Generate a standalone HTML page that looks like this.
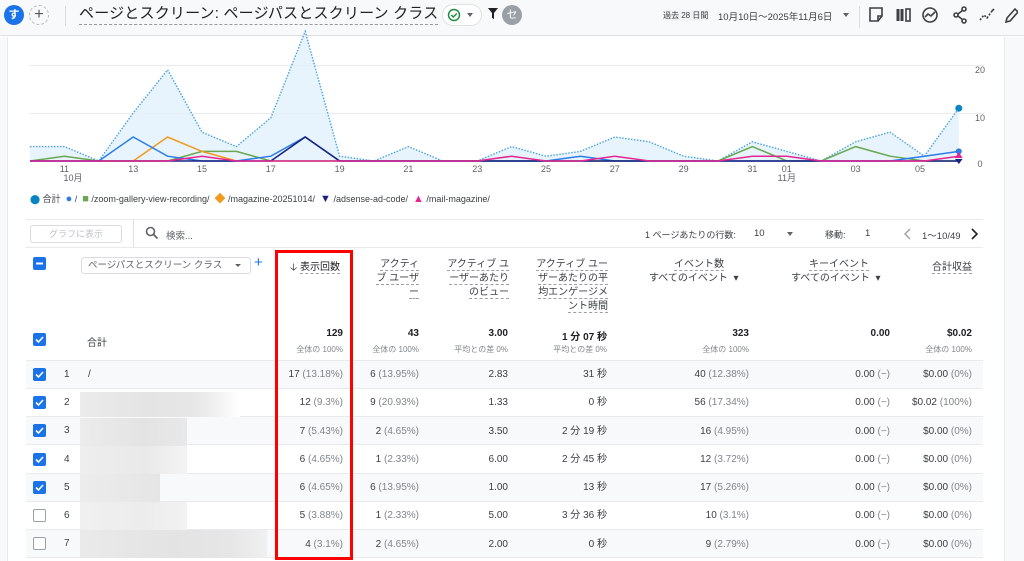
<!DOCTYPE html>
<html><head><meta charset="utf-8"><style>
*{box-sizing:border-box;margin:0;padding:0}
body{width:1024px;height:561px;overflow:hidden;background:#fff;font-family:"Liberation Sans","Noto Sans CJK JP",sans-serif;color:#3c4043;position:relative}
.a{position:absolute;white-space:nowrap}
.r{text-align:right}
.t{font-size:10px}
.g{color:#80868b}
.dash{border-bottom:1px dashed #9aa0a6}
.cb{position:absolute;width:13px;height:13px;border-radius:2px;background:#1a73e8}
.cb svg{position:absolute;left:1px;top:1px}
.ce{position:absolute;width:13px;height:13px;border-radius:2px;border:1.5px solid #9aa0a6;background:#fff}
.row{position:absolute;left:26px;width:957px;height:28px;border-bottom:1px solid #e8eaed}
</style></head><body>
<div class="a" style="left:0;top:0;width:1024px;height:36px;background:#f8f9fa;border-bottom:1px solid #e0e0e0"></div>
<div class="a" style="left:4px;top:5px;width:20px;height:20px;border-radius:50%;background:#1a73e8;color:#fff;font-size:11px;text-align:center;line-height:20px;font-weight:bold">す</div>
<div class="a" style="left:29px;top:5px;width:20px;height:20px;border-radius:50%;border:1px dashed #bbb;color:#555;font-size:16px;text-align:center;line-height:18px">+</div>
<div class="a" style="left:65px;top:6px;width:1px;height:20px;background:#ddd"></div>
<div class="a" style="left:79px;top:4px;font-size:15px;letter-spacing:0.2px;color:#202124;border-bottom:1.5px dashed #999;line-height:20px">ページとスクリーン: ページパスとスクリーン クラス</div>
<div class="a" style="left:442px;top:4px;width:40px;height:22px;border:1px solid #e0e0e0;border-radius:11px;background:#fff"></div>
<svg class="a" style="left:447px;top:8px" width="14" height="14"><circle cx="7" cy="7" r="5.5" fill="none" stroke="#1e8e3e" stroke-width="1.5"/><path d="M4.3 7l2 2 3.5-3.5" fill="none" stroke="#1e8e3e" stroke-width="1.5"/></svg>
<div class="a" style="left:467px;top:13px;border:3px solid transparent;border-top:4px solid #5f6368"></div>
<svg class="a" style="left:487px;top:7px" width="12" height="14"><path d="M1 1h10l-4 5v6l-2-1V6z" fill="#202124"/></svg>
<div class="a" style="left:502px;top:5px;width:20px;height:20px;border-radius:50%;background:#9aa0a6;color:#fff;font-size:11px;text-align:center;line-height:20px">セ</div>
<div class="a" style="left:663px;top:10px;font-size:8px;color:#3c4043;background:#f1f3f4">過去 28 日間</div>
<div class="a" style="left:718px;top:9px;font-size:9.5px;color:#3c4043">10月10日～2025年11月6日</div>
<div class="a" style="left:843px;top:13px;border:3px solid transparent;border-top:4px solid #5f6368"></div>
<div class="a" style="left:859px;top:6px;width:1px;height:22px;background:#ddd"></div>
<svg class="a" style="left:868px;top:6px;width:150px;height:18px" viewBox="0 0 150 18" fill="none" stroke="#3c4043" stroke-width="1.6">
<path d="M2 2h12v8l-4 5H2z M10 15v-5h4"/>
<path d="M30 3v12M34 3v12" stroke-width="3"/><rect x="38" y="3" width="4" height="12"/>
<circle cx="62" cy="9" r="7"/><path d="M57 11l3-3 3 2 4-4"/>
<circle cx="96" cy="3" r="2"/><circle cx="88" cy="9" r="2"/><circle cx="96" cy="15" r="2"/><path d="M90 8l5-4M90 10l5 4"/>
<path d="M112 14l4-5 3 3 5-7" stroke-dasharray="2 1.5"/><path d="M124 5l2-2"/>
<path d="M138 16l1-4 8-9 3 3-8 9z"/>
</svg>
<div class="a" style="left:0;top:37px;width:8px;height:524px;background:#f8f9fa;border-right:1px solid #e8eaed"></div>
<div class="a" style="left:1004px;top:37px;width:20px;height:524px;background:#f8f9fa;border-left:1px solid #e8eaed"></div>
<svg class="a" style="left:0;top:0" width="1004" height="210">
<g stroke="#e8eaed" stroke-width="1"><path d="M30 65.5H985M30 113.5H985"/></g>
<path d="M30 146.6L64.4 146.6L98.8 161L133.2 113L167.6 69.8L202 132.2L236.4 146.6L270.8 117.8L305.2 31.4L339.6 156.2L374 161L408.4 146.6L442.8 161L477.2 161L511.6 146.6L546 156.2L580.4 151.4L614.8 137L649.2 141.8L683.6 156.2L718 161L752.4 141.8L786.8 151.4L821.2 161L855.6 141.8L890 132.2L924.4 156.2L958.8 108.2L958.8 161L30 161Z" fill="#e3f2fd" opacity=".85"/>
<path d="M30 146.6L64.4 146.6L98.8 161L133.2 113L167.6 69.8L202 132.2L236.4 146.6L270.8 117.8L305.2 31.4L339.6 156.2L374 161L408.4 146.6L442.8 161L477.2 161L511.6 146.6L546 156.2L580.4 151.4L614.8 137L649.2 141.8L683.6 156.2L718 161L752.4 141.8L786.8 151.4L821.2 161L855.6 141.8L890 132.2L924.4 156.2L958.8 108.2" fill="none" stroke="#4aa3df" stroke-width="1.4" stroke-dasharray="1.5 1.5"/>
<path d="M30 161L64.4 156.2L98.8 161L167.6 161L202 151.4L236.4 151.4L270.8 161L718 161L752.4 146.6L786.8 161L821.2 161L855.6 146.6L890 156.2L924.4 161L958.8 161" fill="none" stroke="#6aa84f" stroke-width="1.5"/>
<path d="M133.2 161L167.6 137L202 151.4L236.4 161" fill="none" stroke="#f29a1e" stroke-width="1.5"/>
<path d="M30 161L98.8 161L133.2 137L167.6 156.2L202 161L236.4 161L270.8 156.2L305.2 137L339.6 161L546 161L580.4 156.2L614.8 161L890 161L924.4 156.2L958.8 151.4" fill="none" stroke="#2b7de9" stroke-width="1.5"/>
<path d="M30 161L270.8 161L305.2 137L339.6 161L958.8 161" fill="none" stroke="#1a237e" stroke-width="1.6"/>
<path d="M30 161L167.6 161L202 156.2L236.4 161L477.2 161L511.6 156.2L546 161L580.4 161L614.8 156.2L649.2 161L718 161L752.4 156.2L786.8 156.2L821.2 161L924.4 161L958.8 156.2" fill="none" stroke="#e52592" stroke-width="1.5"/>
<circle cx="958.8" cy="108.2" r="3.5" fill="#0b84c4"/><circle cx="958.8" cy="151.4" r="3" fill="#2b7de9"/><path d="M955 158l3.8-6 3.8 6z" fill="#e52592"/><path d="M955 159h7.6l-3.8 5z" fill="#1a237e"/>
<g font-size="9" fill="#5f6368" font-family="Liberation Sans,sans-serif" text-anchor="middle">
<text x="64.4" y="172">11</text><text x="73" y="181">10月</text><text x="133.2" y="172">13</text><text x="202" y="172">15</text><text x="270.8" y="172">17</text><text x="339.6" y="172">19</text><text x="408.4" y="172">21</text><text x="477.2" y="172">23</text><text x="546" y="172">25</text><text x="614.8" y="172">27</text><text x="683.6" y="172">29</text><text x="752.4" y="172">31</text><text x="786.8" y="172">01</text><text x="786.8" y="181">11月</text><text x="855.6" y="172">03</text><text x="920" y="172">05</text>
<text x="980" y="73">20</text><text x="980" y="121">10</text><text x="980" y="167">0</text></g>
</svg>
<div class="a t" style="left:30px;top:190px;font-size:9px;color:#3c4043">
<span style="color:#0b84c4">⬤</span> 合計 &nbsp;<span style="color:#2b7de9;font-size:11px">●</span> / &nbsp;<span style="color:#6aa84f;font-size:11px">■</span> /zoom-gallery-view-recording/ &nbsp;<span style="color:#f29a1e;font-size:11px">◆</span> /magazine-20251014/ &nbsp;<span style="color:#1a237e;font-size:11px">▼</span> /adsense-ad-code/ &nbsp;<span style="color:#e52592;font-size:11px">▲</span> /mail-magazine/</div>
<div class="a" style="left:26px;top:219px;width:957px;height:1px;background:#e8eaed"></div>
<div class="a" style="left:26px;top:247px;width:957px;height:1px;background:#e8eaed"></div>
<div class="a" style="left:30px;top:225px;width:92px;height:18px;border:1px solid #dadce0;border-radius:3px;font-size:9px;color:#bdc1c6;text-align:center;line-height:16px">グラフに表示</div>
<div class="a" style="left:133px;top:220px;width:1px;height:27px;background:#e0e0e0"></div>
<svg class="a" style="left:145px;top:226px" width="14" height="14"><circle cx="5.5" cy="5.5" r="4" fill="none" stroke="#5f6368" stroke-width="1.6"/><path d="M8.5 8.5l4 4" stroke="#5f6368" stroke-width="1.8"/></svg>
<div class="a" style="left:166px;top:228px;font-size:9.5px;color:#5f6368">検索...</div>
<div class="a" style="left:645px;top:228px;font-size:9px;color:#3c4043">1 ページあたりの行数:</div>
<div class="a" style="left:754px;top:228px;font-size:9.5px;color:#3c4043">10</div>
<div class="a" style="left:787px;top:232px;border:3.5px solid transparent;border-top:4px solid #5f6368"></div>
<div class="a" style="left:825px;top:228px;font-size:9px;color:#3c4043">移動:</div>
<div class="a" style="left:865px;top:228px;font-size:9.5px;color:#3c4043">1</div>
<svg class="a" style="left:904px;top:228px" width="8" height="12"><path d="M6 1L1 6l5 5" fill="none" stroke="#9aa0a6" stroke-width="1.4"/></svg>
<div class="a" style="left:922px;top:228px;font-size:9.5px;color:#3c4043">1～10/49</div>
<svg class="a" style="left:970px;top:228px" width="8" height="12"><path d="M2 1l5 5-5 5" fill="none" stroke="#202124" stroke-width="1.6"/></svg>
<div class="cb" style="left:33px;top:257px"><svg width="11" height="11"><path d="M2 5.5h7" stroke="#fff" stroke-width="2"/></svg></div>
<div class="a" style="left:81px;top:257px;width:170px;height:17px;border:1px solid #dadce0;border-radius:3px;font-size:9.5px;color:#5f6368;padding-left:6px;line-height:15px">ページパスとスクリーン クラス</div>
<div class="a" style="left:235px;top:264px;border:3px solid transparent;border-top:3.5px solid #5f6368"></div>
<div class="a" style="left:254px;top:254px;font-size:15px;color:#1a73e8">+</div>
<div class="a t" style="left:290px;top:258px;color:#202124">🡣 <span class="dash">表示回数</span></div>
<div class="a t r" style="left:360px;top:258px;width:59px;line-height:14px;color:#3c4043"><span class="dash">アクティ</span><br><span class="dash">ブ ユーザ</span><br><span class="dash">ー</span></div>
<div class="a t r" style="left:440px;top:258px;width:69px;line-height:14px"><span class="dash">アクティブ ユ</span><br><span class="dash">ーザーあたり</span><br><span class="dash">のビュー</span></div>
<div class="a t r" style="left:530px;top:258px;width:78px;line-height:14px"><span class="dash">アクティブ ユー</span><br><span class="dash">ザーあたりの平</span><br><span class="dash">均エンゲージメ</span><br><span class="dash">ント時間</span></div>
<div class="a t" style="left:649px;top:258px;line-height:14px"><span class="dash" style="margin-left:25px">イベント数</span><br>すべてのイベント &nbsp;▾</div>
<div class="a t" style="left:791px;top:258px;line-height:14px"><span class="dash" style="margin-left:18px">キーイベント</span><br>すべてのイベント &nbsp;▾</div>
<div class="a t r" style="left:900px;top:258px;width:72px"><span class="dash">合計収益</span></div>
<div class="cb" style="left:33px;top:333px"><svg width="11" height="11"><path d="M2 5.5l2.5 2.5 4.5-5" fill="none" stroke="#fff" stroke-width="1.6"/></svg></div>
<div class="a t" style="left:87px;top:334px;color:#3c4043">合計</div>
<div class="a r" style="left:0;top:328px;width:343px;font-size:10px;font-weight:bold;color:#202124">129</div>
<div class="a r" style="left:0;top:328px;width:419px;font-size:10px;font-weight:bold;color:#202124">43</div>
<div class="a r" style="left:0;top:328px;width:508px;font-size:10px;font-weight:bold;color:#202124">3.00</div>
<div class="a r" style="left:0;top:328px;width:607px;font-size:10px;font-weight:bold;color:#202124">1 分 07 秒</div>
<div class="a r" style="left:0;top:328px;width:749px;font-size:10px;font-weight:bold;color:#202124">323</div>
<div class="a r" style="left:0;top:328px;width:890px;font-size:10px;font-weight:bold;color:#202124">0.00</div>
<div class="a r" style="left:0;top:328px;width:972px;font-size:10px;font-weight:bold;color:#202124">$0.02</div>
<div class="a r g" style="left:0;top:344px;width:343px;font-size:8px">全体の 100%</div>
<div class="a r g" style="left:0;top:344px;width:419px;font-size:8px">全体の 100%</div>
<div class="a r g" style="left:0;top:344px;width:508px;font-size:8px">平均との差 0%</div>
<div class="a r g" style="left:0;top:344px;width:607px;font-size:8px">平均との差 0%</div>
<div class="a r g" style="left:0;top:344px;width:749px;font-size:8px">全体の 100%</div>
<div class="a r g" style="left:0;top:344px;width:972px;font-size:8px">全体の 100%</div>
<div class="a" style="left:26px;top:360px;width:957px;height:1px;background:#e8eaed"></div>
<div class="row" style="top:361px;background:#f8f9fa"></div>
<div class="row" style="top:389px;background:#fff"></div>
<div class="row" style="top:417px;background:#f8f9fa"></div>
<div class="row" style="top:446px;background:#fff"></div>
<div class="row" style="top:474px;background:#f8f9fa"></div>
<div class="row" style="top:502px;background:#fff"></div>
<div class="row" style="top:530px;background:#f8f9fa"></div>
<div class="a" style="left:80px;top:392px;width:160px;height:25px;background:linear-gradient(90deg,#ebebeb 0,#e4e4e4 40%,#e6e6e6 70%,#f0f0f0 85%,#fff 100%)"></div>
<div class="a" style="left:80px;top:418px;width:107px;height:28px;background:linear-gradient(90deg,#ececec,#e3e3e3 60%,#e8e8e8)"></div>
<div class="a" style="left:80px;top:446px;width:107px;height:28px;background:linear-gradient(90deg,#eeeeee,#e9e9e9 60%,#f3f3f3)"></div>
<div class="a" style="left:80px;top:474px;width:80px;height:28px;background:linear-gradient(90deg,#ececec,#e5e5e5)"></div>
<div class="a" style="left:80px;top:502px;width:107px;height:28px;background:linear-gradient(90deg,#f0f0f0,#ececec 60%,#f2f2f2)"></div>
<div class="a" style="left:80px;top:530px;width:187px;height:28px;background:linear-gradient(90deg,#eaeaea,#e3e3e3 50%,#e6e6e6 80%,#f0f0f0)"></div>
<div class="cb" style="left:33px;top:368px"><svg width="11" height="11"><path d="M2 5.5l2.5 2.5 4.5-5" fill="none" stroke="#fff" stroke-width="1.6"/></svg></div>
<div class="cb" style="left:33px;top:396px"><svg width="11" height="11"><path d="M2 5.5l2.5 2.5 4.5-5" fill="none" stroke="#fff" stroke-width="1.6"/></svg></div>
<div class="cb" style="left:33px;top:424px"><svg width="11" height="11"><path d="M2 5.5l2.5 2.5 4.5-5" fill="none" stroke="#fff" stroke-width="1.6"/></svg></div>
<div class="cb" style="left:33px;top:453px"><svg width="11" height="11"><path d="M2 5.5l2.5 2.5 4.5-5" fill="none" stroke="#fff" stroke-width="1.6"/></svg></div>
<div class="cb" style="left:33px;top:481px"><svg width="11" height="11"><path d="M2 5.5l2.5 2.5 4.5-5" fill="none" stroke="#fff" stroke-width="1.6"/></svg></div>
<div class="ce" style="left:33px;top:509px"></div>
<div class="ce" style="left:33px;top:537px"></div>
<div class="a t" style="left:64px;top:369px">1</div><div class="a t" style="left:88px;top:369px">/</div>
<div class="a t" style="left:64px;top:397px">2</div>
<div class="a t" style="left:64px;top:425px">3</div>
<div class="a t" style="left:64px;top:454px">4</div>
<div class="a t" style="left:64px;top:482px">5</div>
<div class="a t" style="left:64px;top:510px">6</div>
<div class="a t" style="left:64px;top:538px">7</div>
<div class="a t r" style="left:0;width:343px;line-height:28.3px;top:361px">17 <span class="g">(13.18%)</span><br>12 <span class="g">(9.3%)</span><br>7 <span class="g">(5.43%)</span><br>6 <span class="g">(4.65%)</span><br>6 <span class="g">(4.65%)</span><br>5 <span class="g">(3.88%)</span><br>4 <span class="g">(3.1%)</span></div>
<div class="a t r" style="left:0;width:419px;line-height:28.3px;top:361px">6 <span class="g">(13.95%)</span><br>9 <span class="g">(20.93%)</span><br>2 <span class="g">(4.65%)</span><br>1 <span class="g">(2.33%)</span><br>6 <span class="g">(13.95%)</span><br>1 <span class="g">(2.33%)</span><br>2 <span class="g">(4.65%)</span></div>
<div class="a t r" style="left:0;width:508px;line-height:28.3px;top:361px">2.83<br>1.33<br>3.50<br>6.00<br>1.00<br>5.00<br>2.00</div>
<div class="a t r" style="left:0;width:607px;line-height:28.3px;top:361px">31 秒<br>0 秒<br>2 分 19 秒<br>2 分 45 秒<br>13 秒<br>3 分 36 秒<br>0 秒</div>
<div class="a t r" style="left:0;width:749px;line-height:28.3px;top:361px">40 <span class="g">(12.38%)</span><br>56 <span class="g">(17.34%)</span><br>16 <span class="g">(4.95%)</span><br>12 <span class="g">(3.72%)</span><br>17 <span class="g">(5.26%)</span><br>10 <span class="g">(3.1%)</span><br>9 <span class="g">(2.79%)</span></div>
<div class="a t r" style="left:0;width:890px;line-height:28.3px;top:361px">0.00 <span class="g">(−)</span><br>0.00 <span class="g">(−)</span><br>0.00 <span class="g">(−)</span><br>0.00 <span class="g">(−)</span><br>0.00 <span class="g">(−)</span><br>0.00 <span class="g">(−)</span><br>0.00 <span class="g">(−)</span></div>
<div class="a t r" style="left:0;width:972px;line-height:28.3px;top:361px">$0.00 <span class="g">(0%)</span><br>$0.02 <span class="g">(100%)</span><br>$0.00 <span class="g">(0%)</span><br>$0.00 <span class="g">(0%)</span><br>$0.00 <span class="g">(0%)</span><br>$0.00 <span class="g">(0%)</span><br>$0.00 <span class="g">(0%)</span></div>
<div class="a" style="left:275px;top:250px;width:78px;height:310px;border:3px solid #f00"></div>
</body></html>
